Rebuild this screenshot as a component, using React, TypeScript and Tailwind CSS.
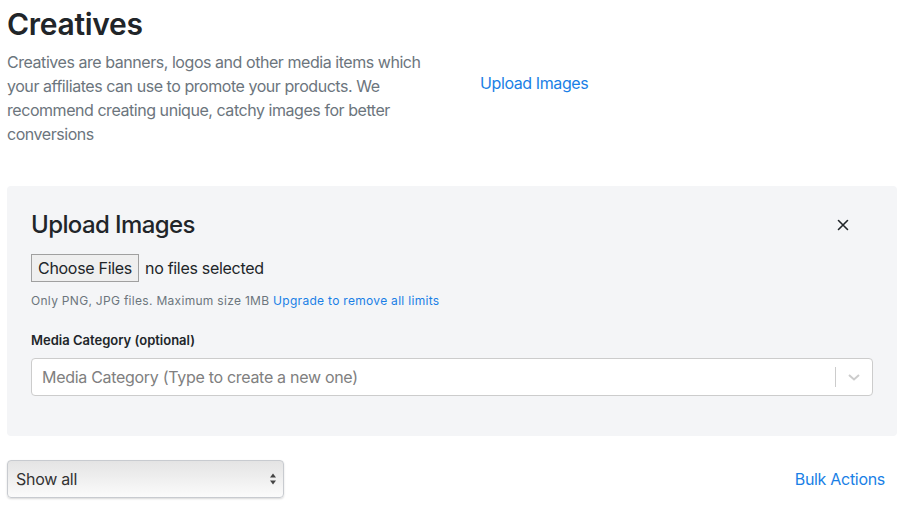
import React from 'react';

const font = { fontFamily: 'Inter, "Noto Sans", "Liberation Sans", sans-serif' };

export default function App() {
  return (
    <div className="min-h-[515px] w-[906px] bg-white px-[7px] text-[#212529]" style={font}>
      <div className="flex">
        <div className="w-[445px] shrink-0">
          <h1 className="pt-[6px] text-[30px] font-semibold leading-[36px] tracking-[-0.3px]">Creatives</h1>
          <p className="mt-[8px] w-[432px] text-[16px] leading-[24px] text-[#6c757d] tracking-[-0.45px]">
            Creatives are banners, logos and other media items which your affiliates can use to promote your products. We recommend creating unique, catchy images for better conversions
          </p>
        </div>
        <div className="pl-[28px] pt-[71px]">
          <a className="text-[16px] leading-[24px] text-[#1a7fe6] tracking-[-0.4px]" href="#">Upload Images</a>
        </div>
      </div>

      <div className="mt-[40px] w-[890px] rounded-[4px] bg-[#f4f5f7] px-[24px] pb-[40px] pt-[24px]">
        <div className="flex items-center justify-between">
          <h2 className="text-[24px] font-medium leading-[30px] tracking-[-0.6px]">Upload Images</h2>
          <button className="mr-[24px] text-[#212529]">
            <svg width="12" height="12" viewBox="0 0 12 12">
              <path d="M1.5 1.5 L10.5 10.5 M10.5 1.5 L1.5 10.5" stroke="#212529" strokeWidth="1.6" strokeLinecap="round" />
            </svg>
          </button>
        </div>
        <div className="mt-[14px] flex items-center gap-[6px]">
          <div className="flex h-[28px] w-[108px] items-center justify-center border border-[#a0a0a0] bg-[#efefef] text-[16px] tracking-[-0.3px]">
            Choose Files
          </div>
          <span className="text-[16px] tracking-[-0.3px]">no files selected</span>
        </div>
        <div className="mt-[11px] text-[12px] leading-[16px] text-[#6c757d] tracking-[0.3px]">
          Only PNG, JPG files. Maximum size 1MB <a href="#" className="text-[#1a7fe6]">Upgrade to remove all limits</a>
        </div>
        <div className="mt-[23px] text-[13px] font-semibold leading-[16px]">Media Category (optional)</div>
        <div className="mt-[10px] flex h-[38px] items-center rounded-[4px] border border-[#cccccc] bg-white">
          <span className="flex-1 pl-[10px] text-[16px] text-[#808080] tracking-[-0.3px]">Media Category (Type to create a new one)</span>
          <span className="h-[20px] w-px bg-[#cccccc]" />
          <span className="flex w-[36px] justify-center">
            <svg width="14" height="10" viewBox="0 0 14 10">
              <path d="M2 3 L7 7.5 L12 3" stroke="#cccccc" strokeWidth="2" fill="none" />
            </svg>
          </span>
        </div>
      </div>

      <div className="mt-[24px] flex items-center justify-between">
        <div className="flex h-[38px] w-[277px] items-center justify-between rounded-[4px] border border-[#c8cbd0] bg-gradient-to-b from-[#e4e4e4] to-[#fbfbfb] pl-[8px] pr-[6px] shadow-[0_1px_2px_rgba(0,0,0,0.15)]">
          <span className="text-[16px] text-[#333] tracking-[-0.3px]">Show all</span>
          <svg width="8" height="14" viewBox="0 0 8 14">
            <path d="M4 1.5 L7 5.5 L1 5.5 Z M4 12.5 L7 8.5 L1 8.5 Z" fill="#444" />
          </svg>
        </div>
        <a href="#" className="mr-[14px] text-[16px] text-[#1a7fe6] tracking-[-0.3px]">Bulk Actions</a>
      </div>
    </div>
  );
}
